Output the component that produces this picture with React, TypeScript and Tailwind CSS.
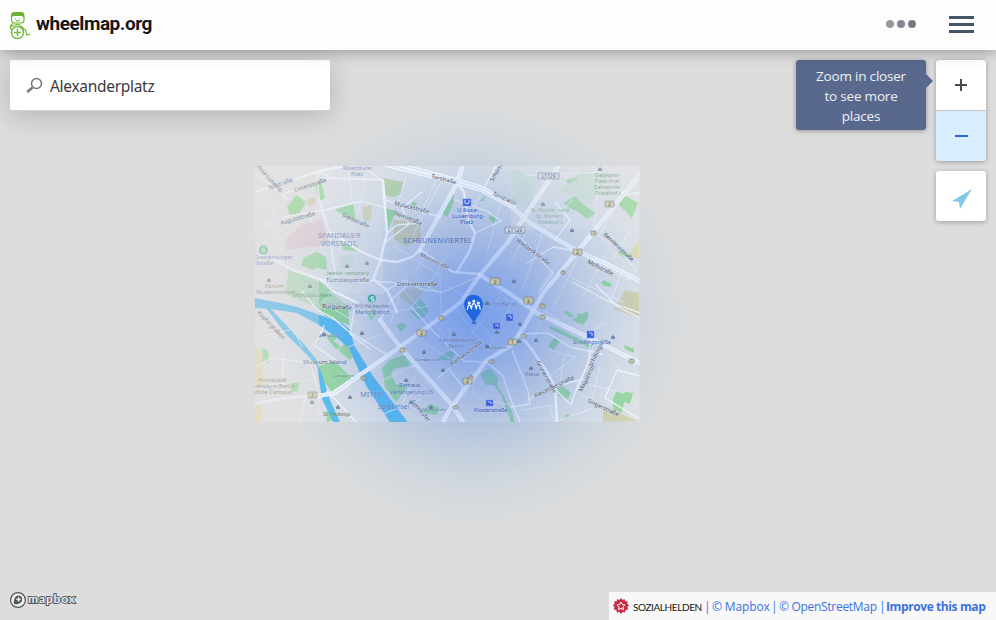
import React from "react";

type Label = [string, number, number, number?, number?, string?];

const parks = [
  "M287 207 L296 195 L307 202 L299 213 L303 215 L290 216Z",
  "M315 184 L321 181 L325 198 L319 201Z",
  "M335 210 L353 203 L356 223Z",
  "M303 258 L317 252 L326 257 L327 270 L317 268 L312 270 L301 265Z",
  "M342 243 L359 245 L356 251 L343 250Z",
  "M442 213 L453 191 L454 202 L447 217Z",
  "M385 208 L396 211 L388 230Z",
  "M480 201 L486 195 L484 201Z",
  "M411 204 L414 201 L417 204 L415 207Z",
  "M488 218 L493 214 L498 219 L494 223Z",
  "M563 203 L575 196 L585 206 L596 213 L587 219 L577 211 L569 208Z",
  "M617 203 L626 196 L638 203 L632 218Z",
  "M566 180 L578 177 L578 180 L568 184Z",
  "M410 311 L420 298 L428 308 L427 315 L419 320Z",
  "M396 326 L401 322 L407 326 L401 332Z",
  "M437 359 L449 351 L455 353 L451 361Z",
  "M382 368 L390 360 L403 355 L412 362 L409 366 L394 369 L391 375 L396 384 L407 388 L396 402 L385 387Z",
  "M480 374 L490 368 L498 378 L497 384 L511 409 L515 422 L511 422 L501 395 L494 385 L486 385Z",
  "M571 320 L577 317 L577 313 L582 314 L588 311 L588 318 L583 325Z",
  "M563 312 L567 311 L574 316 L571 318Z",
  "M549 325 L561 330 L594 346 L594 350 L573 340 L550 329Z",
  "M548 346 L554 338 L560 341 L554 350Z",
  "M557 387 L562 385 L571 393 L568 399 L559 396Z",
  "M613 398 L617 391 L623 394 L625 392 L633 393 L630 404 L624 402 L622 413 L613 409Z",
  "M617 251 L621 250 L631 257 L623 257Z",
  "M601 283 L604 280 L612 284 L610 287 L604 286Z",
  "M327 338 L335 329 L341 332 L334 341 L342 348 L336 349Z",
  "M339 351 L345 342 L356 352 L350 360Z",
  "M319 366 L333 361 L340 366 L353 380 L334 395 L325 383Z",
  "M368 314 L374 308 L376 315 L371 321Z",
  "M262 348 L268 351 L269 363 L263 361Z",
  "M292 383 L299 382 L298 391 L291 392Z",
  "M422 413 L429 404 L440 408 L436 415Z",
  "M326 411 L332 412 L334 420 L327 422Z",
  "M624 345 L629 347 L634 349 L634 353 L625 349Z",
  "M564 416 L568 414 L570 417 L566 419Z",
];

const mainRoads = [
  "M383 164 L418 173 L457 183 L481 190 L512 207 L530 223 L577 251 L607 264 L643 283",
  "M396 164 L457 180 L483 188 L514 206",
  "M641 173 L578 251 L543 293 L525 325 L512 345 L487 360 L450 409 L443 422",
  "M480 275 L512 295 L537 313 L590 338 L643 365",
  "M380 320 L400 347 L427 377 L452 405 L463 422",
  "M560 164 L527 213 L508 242 L480 275 L461 302 L429 326 L400 347 L360 375 L335 392",
  "M318 396 L335 393 L348 384",
  "M463 164 L457 183 L420 250",
];
const secondaryRoads = [
  "M255 192 L317 172 L343 166",
  "M255 403 L295 397 L320 396",
  "M255 255 L272 258 L293 270 L320 279 L335 292 L358 303",
  "M420 250 L412 257 L397 262 L380 260 L360 251 L330 232",
  "M519 334 L530 347 L546 370 L555 387 L557 422",
  "M383 181 L387 233 L380 262 L373 279 L387 290 L397 312",
  "M457 183 L464 192 L468 220 L475 233 L470 250 L457 272",
  "M420 250 L453 272 L480 274",
];
const midRoads = [
  "M264 226 L288 216 L325 210 L362 201 L383 207",
  "M328 176 L317 172 L319 199 L329 232 L336 279",
  "M255 173 L276 189 L288 199",
  "M285 193 L328 178 L383 180",
  "M386 200 L408 208 L441 217",
  "M387 233 L397 225 L422 223",
  "M383 181 L370 172 L363 166",
  "M422 192 L402 208 L409 224 L383 244",
  "M496 166 L483 190 L512 206",
  "M455 200 L487 211 L501 221 L475 233",
  "M555 202 L570 220 L555 240",
  "M511 229 L530 248 L553 273 L539 292",
  "M577 251 L553 247 L527 263",
  "M591 338 L588 364 L577 387 L571 405 L555 389",
  "M595 341 L587 365 L577 390",
  "M640 376 L617 370 L605 398 L640 419",
  "M519 334 L548 333 L570 347 L602 354",
  "M528 400 L553 387 L583 379",
  "M512 350 L528 391 L530 404 L511 407",
  "M438 378 L449 369 L463 387 L454 407",
  "M411 307 L435 333 L464 361 L483 362",
  "M322 280 L373 281 L399 283",
  "M380 321 L391 300 L408 285 L425 285 L438 292",
  "M383 292 L405 280 L420 289 L443 292 L480 276",
  "M302 291 L316 309 L333 318 L348 331 L386 354",
  "M255 367 L272 358 L310 363 L317 386",
  "M283 355 L283 398", "M305 399 L300 422",
  "M324 326 L314 345 L335 360",
  "M596 285 L618 307 L640 318",
  "M572 282 L612 303 L640 313",
  "M485 360 L503 376 L511 400 L520 422",
  "M327 391 L344 409 L356 422",
  "M354 310 L350 334 L370 349",
  "M613 188 L626 194 L640 193",
];
const minorRoads = [
  "M270 201 L279 226 L266 258", "M301 193 L313 225", "M348 171 L353 204", "M365 180 L356 222",
  "M406 177 L399 201", "M436 181 L419 218", "M441 182 L413 235", "M480 196 L467 222",
  "M500 205 L487 253", "M525 176 L600 172", "M572 200 L540 235", "M598 174 L595 231",
  "M615 207 L600 234", "M528 228 L509 268", "M542 235 L522 291", "M560 260 L538 289",
  "M578 258 L552 310", "M606 254 L583 296", "M624 266 L610 303", "M630 230 L613 259",
  "M394 246 L441 276", "M432 242 L415 273", "M448 254 L430 283", "M400 295 L391 322",
  "M440 275 L441 314", "M447 286 L475 303", "M385 313 L429 306", "M405 292 L446 336",
  "M500 297 L470 337", "M513 300 L488 350", "M541 320 L533 340", "M577 342 L606 322",
  "M575 357 L547 378", "M564 356 L560 384", "M608 353 L627 381", "M600 366 L592 399",
  "M549 407 L555 422 L596 407", "M259 337 L293 329 L302 347", "M263 385 L316 380",
  "M319 398 L318 422", "M357 289 L373 317", "M337 274 L374 286", "M335 310 L357 323",
  "M348 347 L382 334", "M383 380 L424 361", "M406 359 L431 387", "M416 376 L403 402",
  "M450 328 L448 350", "M472 372 L474 395", "M478 398 L510 405", "M383 414 L421 399",
  "M426 344 L451 359", "M521 410 L554 405", "M588 384 L619 392", "M579 393 L601 408",
  "M465 305 L493 339", "M455 308 L481 341", "M489 282 L509 301", "M592 232 L616 246 L637 272",
  "M594 262 L632 281", "M572 278 L623 302", "M549 350 L575 357", "M533 304 L560 320",
];

const roadNames: Label[] = [
  ["Torstraße", 269, 190, -20], ["Linienstraße", 295, 192, -18], ["Auguststraße", 281, 225, -16],
  ["Gipsstraße", 342, 216, 25], ["Torstraße", 431, 178, 14], ["Torstraße", 492, 195, 24],
  ["Mulackstraße", 394, 205, 14], ["Steinstraße", 393, 214, 22], ["Münzstraße", 420, 256, 26],
  ["Dircksenstraße", 397, 286, 0], ["Schönhauser", 493, 182, -60], ["Wadzeckstraße", 516, 241, 37],
  ["Mollstraße", 587, 263, 27], ["Berolinastraße", 603, 235, 43], ["Rosa-Luxemb.", 256, 166, 48],
  ["Kupfergraben", 257, 313, 46], ["Tucholskystraße", 326, 282, 0],
  ["Singerstraße", 587, 402, 25], ["Alexanderstraße", 535, 398, -26], ["Magazinstr.", 582, 392, -64],
  ["Schillingstr.", 592, 367, -64], ["Burgstraße", 322, 308, 3], ["Grunerstraße", 536, 362, 61],
  ["Rathausstraße", 452, 366, -37], ["Spreeufer", 411, 402, 50],
];
const placeNames: Label[] = [
  ["Rosenthaler", 343, 170, 0, 5.2, "#7988bd"], ["Platz", 351, 176, 0, 5.5, "#7988bd"],
  ["SPANDAUER", 318, 238, 0, 7.4, "#7482ad"], ["VORSTADT", 321, 246, 0, 7.2, "#7482ad"],
  ["Oranienburger", 254, 259, 0, 5.5, "#7988bd"], ["Straße", 256, 265, 0, 5.7, "#7988bd"],
  ["Forum", 265, 288, 0, 6, "#81877f"], ["Museumsinsel", 256, 294, 0, 5.8, "#81877f"],
  ["Jewish cemetery", 327, 275, 0, 5.5, "#629571"], ["Monbijou Park", 293, 297, 0, 5.7, "#5e9069"],
  ["U Rosa-", 457, 212, 0, 6, "#304fc0"], ["Luxemburg-", 452, 218, 0, 5.7, "#304fc0"], ["Platz", 460, 224, 0, 6, "#304fc0"],
  ["SCHEUNENVIERTEL", 403, 243, 0, 7.6, "#4468b3"],
  ["St. Nicolai - und", 531, 212, 0, 5.2, "#6c9e91"], ["St. Marien-", 536, 218, 0, 5.4, "#6c9e91"], ["Friedhof I", 538, 224, 0, 5.4, "#6c9e91"],
  ["Georgen-", 595, 177, 0, 5.7, "#76a687"], ["Parochial", 595, 183, 0, 5.7, "#76a687"], ["Gemeinde", 594, 189, 0, 5.4, "#76a687"], ["Friedhof I", 595, 195, 0, 5.7, "#76a687"],
  ["Museum Island", 303, 364, 0, 6, "#63728f"], ["Humboldt", 258, 382, 0, 6, "#857f6a"],
  ["iversity in Berlin", 253, 388, 0, 5.5, "#857f6a"], ["Mitte Campus", 253, 394, 0, 6, "#857f6a"],
  ["S+U Hackescher", 355, 308, 0, 4.6, "#526fae"], ["Markt Station", 355, 314, 0, 5.5, "#526fae"],
  ["MITTE", 360, 397, 0, 7.5, "#6484ba"], ["Spreeinsel", 378, 409, 0, 6.4, "#557cba"],
  ["Fernsehturm", 439, 342, 0, 6, "#5273b5"], ["Berlin", 448, 348, 0, 5.5, "#5273b5"],
  ["Rathaus", 399, 387, 0, 5.5, "#3764a0"], ["Verlängerung U5", 390, 394, 0, 5.4, "#4474ba"],
  ["Klosterstraße", 474, 412, 0, 5.3, "#2d53b7"], ["Park Inn Berlin", 481, 306, 0, 5, "#4d70bd"],
  ["Schillingstraße", 573, 344, 0, 5.5, "#4665b5"], ["Alexa", 525, 376, 0, 5.5, "#626e9a"],
  ["Alte National-", 319, 337, 0, 3.5, "#607391"],
  ["St. Hedwigs", 323, 416, 0, 5, "#65796e"], ["Nikolaikirche", 422, 411, 0, 4, "#426f9d"],
  ["Weltzeituhr", 486, 349, 0, 4, "#4c6698"], ["DomAquarée", 415, 361, 0, 4, "#4c6698"],
  ["Lustgarten", 333, 377, 0, 4.2, "#518d6f"],
];

const shields: [number, number, string, number, number][] = [
  [538,173,"L1129",21,6],[505,227,"L1129",20,6],[605,201,"2",9,6],[490,278,"2",10,7],[573,249,"2",9,6],
  [417,330,"2",9,6],[463,378,"2",9,6],[308,392,"2",9,6],[524,297,"2",9,7],[508,339,"1",9,6],
  [591,231,"1",5,4],[561,271,"1",4,3],[400,348,"1",5,4],[439,316,"1",5,4],[489,360,"1",5,3],[540,304,"1",5,4],
  [540,315,"1",5,4],[521,334,"1",5,4],[629,359,"1",5,4],[361,376,"1",5,4],[453,406,"1",5,3],[469,376,"1",4,3],
];
const pois = [[269,280],[310,286],[347,266],[367,263],[324,334],[362,333],[312,402],[350,397],[338,407],[424,352],[454,334],[487,346],[443,370],[431,407],[411,402],[406,380],[519,341],[536,340],[531,368],[487,303],[520,324],[572,230],[613,337],[514,281],[497,332],[543,204],[600,169]];

function MapLabel({ item, road = false }: { item: Label; road?: boolean }) {
  const [text, x, y, angle = 0, size = 5.7, color = "#465168"] = item;
  return <text x={x} y={y} transform={`rotate(${angle} ${x} ${y})`} fontSize={size} fill={color}
    stroke="#e4ebfa" strokeOpacity={road ? .45 : .3} strokeWidth={road ? .9 : .6} paintOrder="stroke">{text}</text>;
}

function Roads() {
  return (
    <g fill="none" strokeLinecap="round" strokeLinejoin="round">
      <g strokeWidth=".8" opacity=".65">{minorRoads.map((d, i) => <path key={i} d={d} />)}</g>
      <g strokeWidth="1.3" opacity=".9">{midRoads.map((d, i) => <path key={i} d={d} />)}</g>
      <g strokeWidth="2.4">{secondaryRoads.map((d, i) => <path key={i} d={d} />)}</g>
      <g strokeWidth="4.2">{mainRoads.map((d, i) => <path key={i} d={d} />)}</g>
    </g>
  );
}

function CityMap() {
  return (
    <svg className="absolute inset-0 h-[620px] w-[996px] font-['Noto_Sans',sans-serif]" viewBox="0 0 996 620">
      <defs>
        <clipPath id="tiles"><path d="M255 166H639.5V422H255Z" /></clipPath>
        <radialGradient id="wash" gradientUnits="userSpaceOnUse" cx="474" cy="316" r="248">
          <stop offset="0" stopColor="#4b81eb" stopOpacity=".73" />
          <stop offset=".17" stopColor="#5384e6" stopOpacity=".62" />
          <stop offset=".36" stopColor="#6590df" stopOpacity=".46" />
          <stop offset=".5" stopColor="#7ba5e0" stopOpacity=".34" />
          <stop offset=".65" stopColor="#9dbfe0" stopOpacity=".24" />
          <stop offset=".82" stopColor="#bfd0de" stopOpacity=".13" />
          <stop offset="1" stopColor="#d4dade" stopOpacity="0" />
        </radialGradient>
        <linearGradient id="fadeLeft"><stop offset="0" stopColor="#ddd" stopOpacity=".46" /><stop offset="1" stopColor="#ddd" stopOpacity=".32" /></linearGradient>
        <radialGradient id="roadLight" gradientUnits="userSpaceOnUse" cx="474" cy="316" r="180">
          <stop offset="0" stopColor="#c5d9ff" stopOpacity=".35" />
          <stop offset=".4" stopColor="#dce9ff" stopOpacity=".45" />
          <stop offset=".8" stopColor="#f3f7ff" stopOpacity=".72" />
          <stop offset="1" stopColor="#f4f6fb" stopOpacity=".75" />
        </radialGradient>
      </defs>
      <g clipPath="url(#tiles)">
        <path d="M255 166H640V422H255Z" fill="#e7e6e7" />
        <path d="M300 226 L322 218 L325 232 L330 244 L319 246 L286 250 L285 240Z" fill="#e9cdd6" />
        <path d="M307 200 L315 197 L316 203 L309 206Z M362 207 L372 205 L371 220 L364 221Z M393 220 L420 222 L421 237 L407 247 L394 239Z M614 309 L625 290 L639 293 V318Z M603 411 L609 408 L637 421 L603 422Z M398 295 Q410 285 424 290 L411 306Z" fill="#dad4a6" />
        <path d="M629 255 L639 240 V258 L632 257Z M255 348 L262 350 L263 385 L255 387Z M255 405 L263 407 L261 422 H255Z" fill="#e8dfae" />
        <path d="M289 268 L319 282 L330 290 L349 308 V321 L326 315 L313 306 L285 294Z" fill="#b9dfb8" />
        <path d="M383 178 L403 182 L401 194 L393 197 L384 195Z" fill="#bdd6a2" />
        <path d="M319 281 L330 290 L319 304Z M320 309 L348 307 L349 325 L325 316Z" fill="#8ed98b" />
        <g fill="#97dc92">{parks.map((d, i) => <path d={d} key={i} />)}</g>
        <path d="M511 169 L538 177 L529 209 L513 199Z M583 170 L611 174 L590 204 L560 190Z M340 256 L354 254 L353 268 L339 268Z" fill="#cae2cc" opacity=".6" />
        <path d="M255 298 L280 303 L297 307 L317 314 L342 323 L350 330 L354 345 L373 376 L409 424 L391 424 L367 387 L359 371 L349 348 L336 337 L319 325 L297 313 L270 309 L255 308Z" fill="#42b7f2" />
        <path d="M270 308 L303 343 L316 359 L322 374 L330 400 L341 424 L334 424 L322 399 L317 366 L308 356 L286 334 L266 308Z" fill="#48baf2" />
        <g stroke="#f4f5fa"><Roads /></g>
      </g>
      <path d="M226 68H722V564H226Z" fill="url(#wash)" />
      <g clipPath="url(#tiles)">
        <g stroke="url(#roadLight)"><Roads /></g>
        <g fill="none" stroke="#b7c8e7" strokeWidth=".5">{mainRoads.map((d, i) => <path key={i} d={d} />)}</g>
        <path d="M319 281 L338 292 M320 304 L375 304 M450 290 L478 274 M405 290 Q425 279 455 302" stroke="#a3b2cb" strokeDasharray="1 1" fill="none" />
        {placeNames.map((n, i) => <MapLabel item={n} key={i} />)}
        {roadNames.map((n, i) => <MapLabel item={n} road key={i} />)}
        {shields.map(([x,y,t,w,h], i) => <g key={i}><rect x={x} y={y} width={w} height={h} rx=".8" fill={t === "L1129" ? "#cfdaeb" : "#cfc58d"} fillOpacity=".72" stroke="#626f84" strokeWidth=".7" strokeOpacity=".8" /><text x={x+w/2} y={y+h-1} fontSize={h > 4 ? 5 : 3} fill="#465265" textAnchor="middle">{t}</text></g>)}
        {pois.map(([x,y], i) => <path key={i} d={`M${x} ${y-2}l2 2v2h-4v-2z`} fill="#52698c" opacity=".68" />)}
        <g fill="#385ed8" stroke="#7897ed" strokeWidth=".6">
          <rect x="463" y="199" width="8" height="7" /><rect x="493" y="323" width="7" height="6" /><rect x="506" y="314" width="7" height="7" /><rect x="587" y="331" width="7" height="7" /><rect x="486" y="400" width="7" height="6" />
        </g>
        <g fill="none" stroke="#e7efff" strokeWidth="1"><path d="M465 200v3q2 2 4 0v-3" /><path d="M495 325h3v2 M508 316h3v3 M589 333h3v3 M488 402h3v2" opacity=".75" /></g>
        <circle cx="263.5" cy="250" r="4.5" fill="#6cc18f" /><circle cx="372" cy="298.5" r="4" fill="#41a7a2" />
        <path d="M265.5 248h-3.5v2h3v2h-3.5 M374 297h-3v2h3v2h-3" fill="none" stroke="#e4f5e9" />
        <path d="M255 166H319V422H255Z" fill="url(#fadeLeft)" />
        <path d="M319 166H383V294H319Z M511 166H639.5V230H511Z" fill="#dde1ea" opacity=".24" />
      </g>
      <g fill="none" stroke="#c9d2dc" strokeOpacity=".1"><circle cx="474" cy="318" r="233" /><circle cx="474" cy="318" r="218" /></g>
      <path d="M474 323 C471 317 465 312 464.3 306 A9.4 9.4 0 1 1 482.7 306 C482 312 477 316 474 323Z" fill="#2167de" />
      <g fill="none" stroke="#fff" strokeWidth="1.15" strokeLinecap="round" strokeLinejoin="round"><circle cx="469.3" cy="303" r="1" /><circle cx="473.8" cy="301.2" r="1" /><circle cx="478.3" cy="303" r="1" /><path d="M467.4 309.5l.7-3.8q1.2-1.2 2.4 0l.9 3.2 1-4.5q1.4-1.6 2.8 0l1 4.5.9-3.2q1.2-1.2 2.4 0l.7 3.8" /></g>
      <path d="m474 320 2 2v2h-4v-2z" fill="#416fd2" />
    </svg>
  );
}

function Header() {
  return (
    <header className="relative z-20 flex h-[50px] items-center justify-between bg-[#fdfdfd] pl-[9px] pr-[22px] shadow-[0_0_15px_rgba(0,0,0,.4)]">
      <div className="flex items-center">
        <svg className="h-[30px] w-[22px]" viewBox="0 0 22 30" fill="none" stroke="#78b83e" strokeWidth="1.2" strokeLinejoin="round">
          <path d="M2.5 6.5V10Q2.5 13 6 13h6q3 0 3-3V6.5" /><path d="M2 8V5.2Q2 2 5.5 2h6.5q3.4 0 3.4 3.2V8q-2-1.5-3-2H5Q3 6.5 2 8Z" fill="#6bb033" stroke="none" />
          <path d="M6 8.5h1M10 8.5h1M6.7 10.6h3.7M4.5 13.5q-3 .5-3.3 3.5 0 2 2 2.6M5.5 15.2q4.5-1.8 6.5.8l2.5 2.4-1.7 1.2M1.6 17l3.3-1.7" /><circle cx="8.5" cy="22.5" r="6" strokeWidth="1.5" /><path d="M4.8 22.5h7.4M8.5 18.8v7.4" strokeWidth="1.5" /><path d="M14 19l2.5.6 1.3 5.5 3-1" />
        </svg>
        <span className="ml-[5px] mt-[-2px] font-['Roboto',sans-serif] text-[19px] leading-6 font-bold tracking-[-.45px] text-[#171717]">wheelmap.org</span>
      </div>
      <div className="flex items-center gap-[33px] pb-[2px]">
        <div className="flex gap-[3px]"><i className="size-2 rounded-full bg-[#92989c]" /><i className="size-2 rounded-full bg-[#838990]" /><i className="size-2 rounded-full bg-[#747a82]" /></div>
        <div className="flex w-[25px] flex-col gap-1"><i className="h-[3px] bg-[#445568]" /><i className="h-[3px] bg-[#445568]" /><i className="h-[3px] bg-[#445568]" /></div>
      </div>
    </header>
  );
}

export default function App() {
  return (
    <div className="relative flex h-[620px] w-[996px] flex-col overflow-hidden bg-[#ddd]">
      <CityMap />
      <Header />
      <main className="relative z-10 flex flex-1 flex-col justify-between">
        <div className="flex items-start justify-between px-[10px] pt-[10px]">
          <div className="flex h-[50px] w-[320px] items-center rounded-[2px] bg-white pl-4 shadow-[0_1px_0_#d1d1d6,0_5px_28px_rgba(0,0,0,.2)]">
            <svg className="h-[17px] w-[17px]" viewBox="0 0 17 17" fill="none" stroke="#777" strokeWidth="1.5"><circle cx="10.5" cy="6.5" r="5" /><path d="M6.5 10.5 1.2 15" strokeWidth="2.5" /></svg>
            <span className="ml-[7px] mt-[2px] font-['Noto_Sans',sans-serif] text-[15.5px] leading-6 tracking-[-.3px] text-[#3b3b3b]">Alexanderplatz</span>
          </div>
          <div className="flex items-start gap-[10px]">
            <div className="relative flex h-[70px] w-[130px] items-center justify-center rounded-[3px] bg-[#58698d] text-center font-['Open_Sans',sans-serif] text-[13.5px] leading-5 tracking-[-.2px] text-white/90 shadow-[0_1px_5px_rgba(0,0,0,.35)]">
              <p className="mt-[2px]">Zoom in closer<br />to see more<br />places</p><i className="absolute -right-[7px] top-[14px] border-y-[7px] border-l-[7px] border-y-transparent border-l-[#58698d]" />
            </div>
            <div className="flex flex-col gap-[10px]">
              <div className="h-[101px] w-[50px] overflow-hidden rounded-[3px] bg-white shadow-[0_1px_5px_rgba(0,0,0,.3)]">
                <div className="flex h-[51px] items-center justify-center border-b border-[#c6c6c6]"><svg className="size-[14px]" viewBox="0 0 14 14"><path d="M1 7h12M7 1v12" stroke="#4b4b4b" strokeWidth="2" /></svg></div>
                <div className="flex h-[50px] items-center justify-center bg-[#d9efff]"><i className="ml-px h-[2px] w-[13px] bg-[#2c65df]" /></div>
              </div>
              <div className="flex h-[50px] w-[50px] items-center justify-center rounded-[3px] bg-white shadow-[0_1px_5px_rgba(0,0,0,.3)]"><svg className="mt-[5px] ml-px size-5" viewBox="0 0 20 20"><path d="M20 0 0 12l7 1 1 7z" fill="#82c9e8" /></svg></div>
            </div>
          </div>
        </div>
        <footer className="flex items-end justify-between pl-[10px]">
          <div className="mb-3 flex items-center gap-[1px] font-['Lato',sans-serif] text-[12px] font-bold leading-4 text-white">
            <svg className="size-4" viewBox="0 0 16 16"><circle cx="8" cy="8" r="7.4" fill="#eee" stroke="#555" strokeWidth="1.2" /><path d="M4 12Q3 5 8 3.5q4 0 4.2 4.2Q11 13 4 12Z" fill="#555" /><path d="m8.5 4.5 1 2 2 .8-2 1-1 2-1-2-2-1 2-.8z" fill="#eee" /></svg>
            <svg className="h-4 w-[50px] overflow-visible"><text x="1" y="10.5" textLength="47" stroke="#555" strokeWidth="1.8" paintOrder="stroke" fill="#eee">mapbox</text></svg>
          </div>
          <div className="flex h-[28px] w-[387px] items-center whitespace-nowrap bg-[#f8f8f8] pt-px pl-1 font-['Open_Sans',sans-serif] text-[12px] leading-5 text-[#3a72df]">
            <svg className="mb-px size-4" viewBox="0 0 16 16" fill="#c92c45"><path d="m8 0 1.5 2 2-1 .7 2.3 2.6.2-.5 2.3 1.7 1.7-1.6 1.6.8 2.4-2.5.5-.6 2.5-2.4-.6L8 16l-1.7-2.1-2.4.6-.6-2.5-2.5-.5.7-2.4L0 7.5l1.6-1.7-.5-2.3 2.6-.2.7-2.3 2 1z" /><path d="m8 4 1.2 2.5 2.8.4-2 2 .4 2.8L8 10.4l-2.4 1.3.4-2.8-2-2 2.8-.4z" fill="none" stroke="white" /></svg>
            <span className="ml-1 w-[71px] font-['Lato',sans-serif] text-[10px] tracking-[-.4px] text-[#171717]">SOZIALHELDEN</span>
            <span className="w-[8px]">|</span>
            <span className="w-[59px] tracking-[-.12px]">© Mapbox</span>
            <span className="w-[8px]">|</span>
            <span className="w-[100px] tracking-[-.3px]">© OpenStreetMap</span>
            <span className="w-[7px]">|</span>
            <span className="font-bold tracking-[-.4px]">Improve this map</span>
          </div>
        </footer>
      </main>
    </div>
  );
}
